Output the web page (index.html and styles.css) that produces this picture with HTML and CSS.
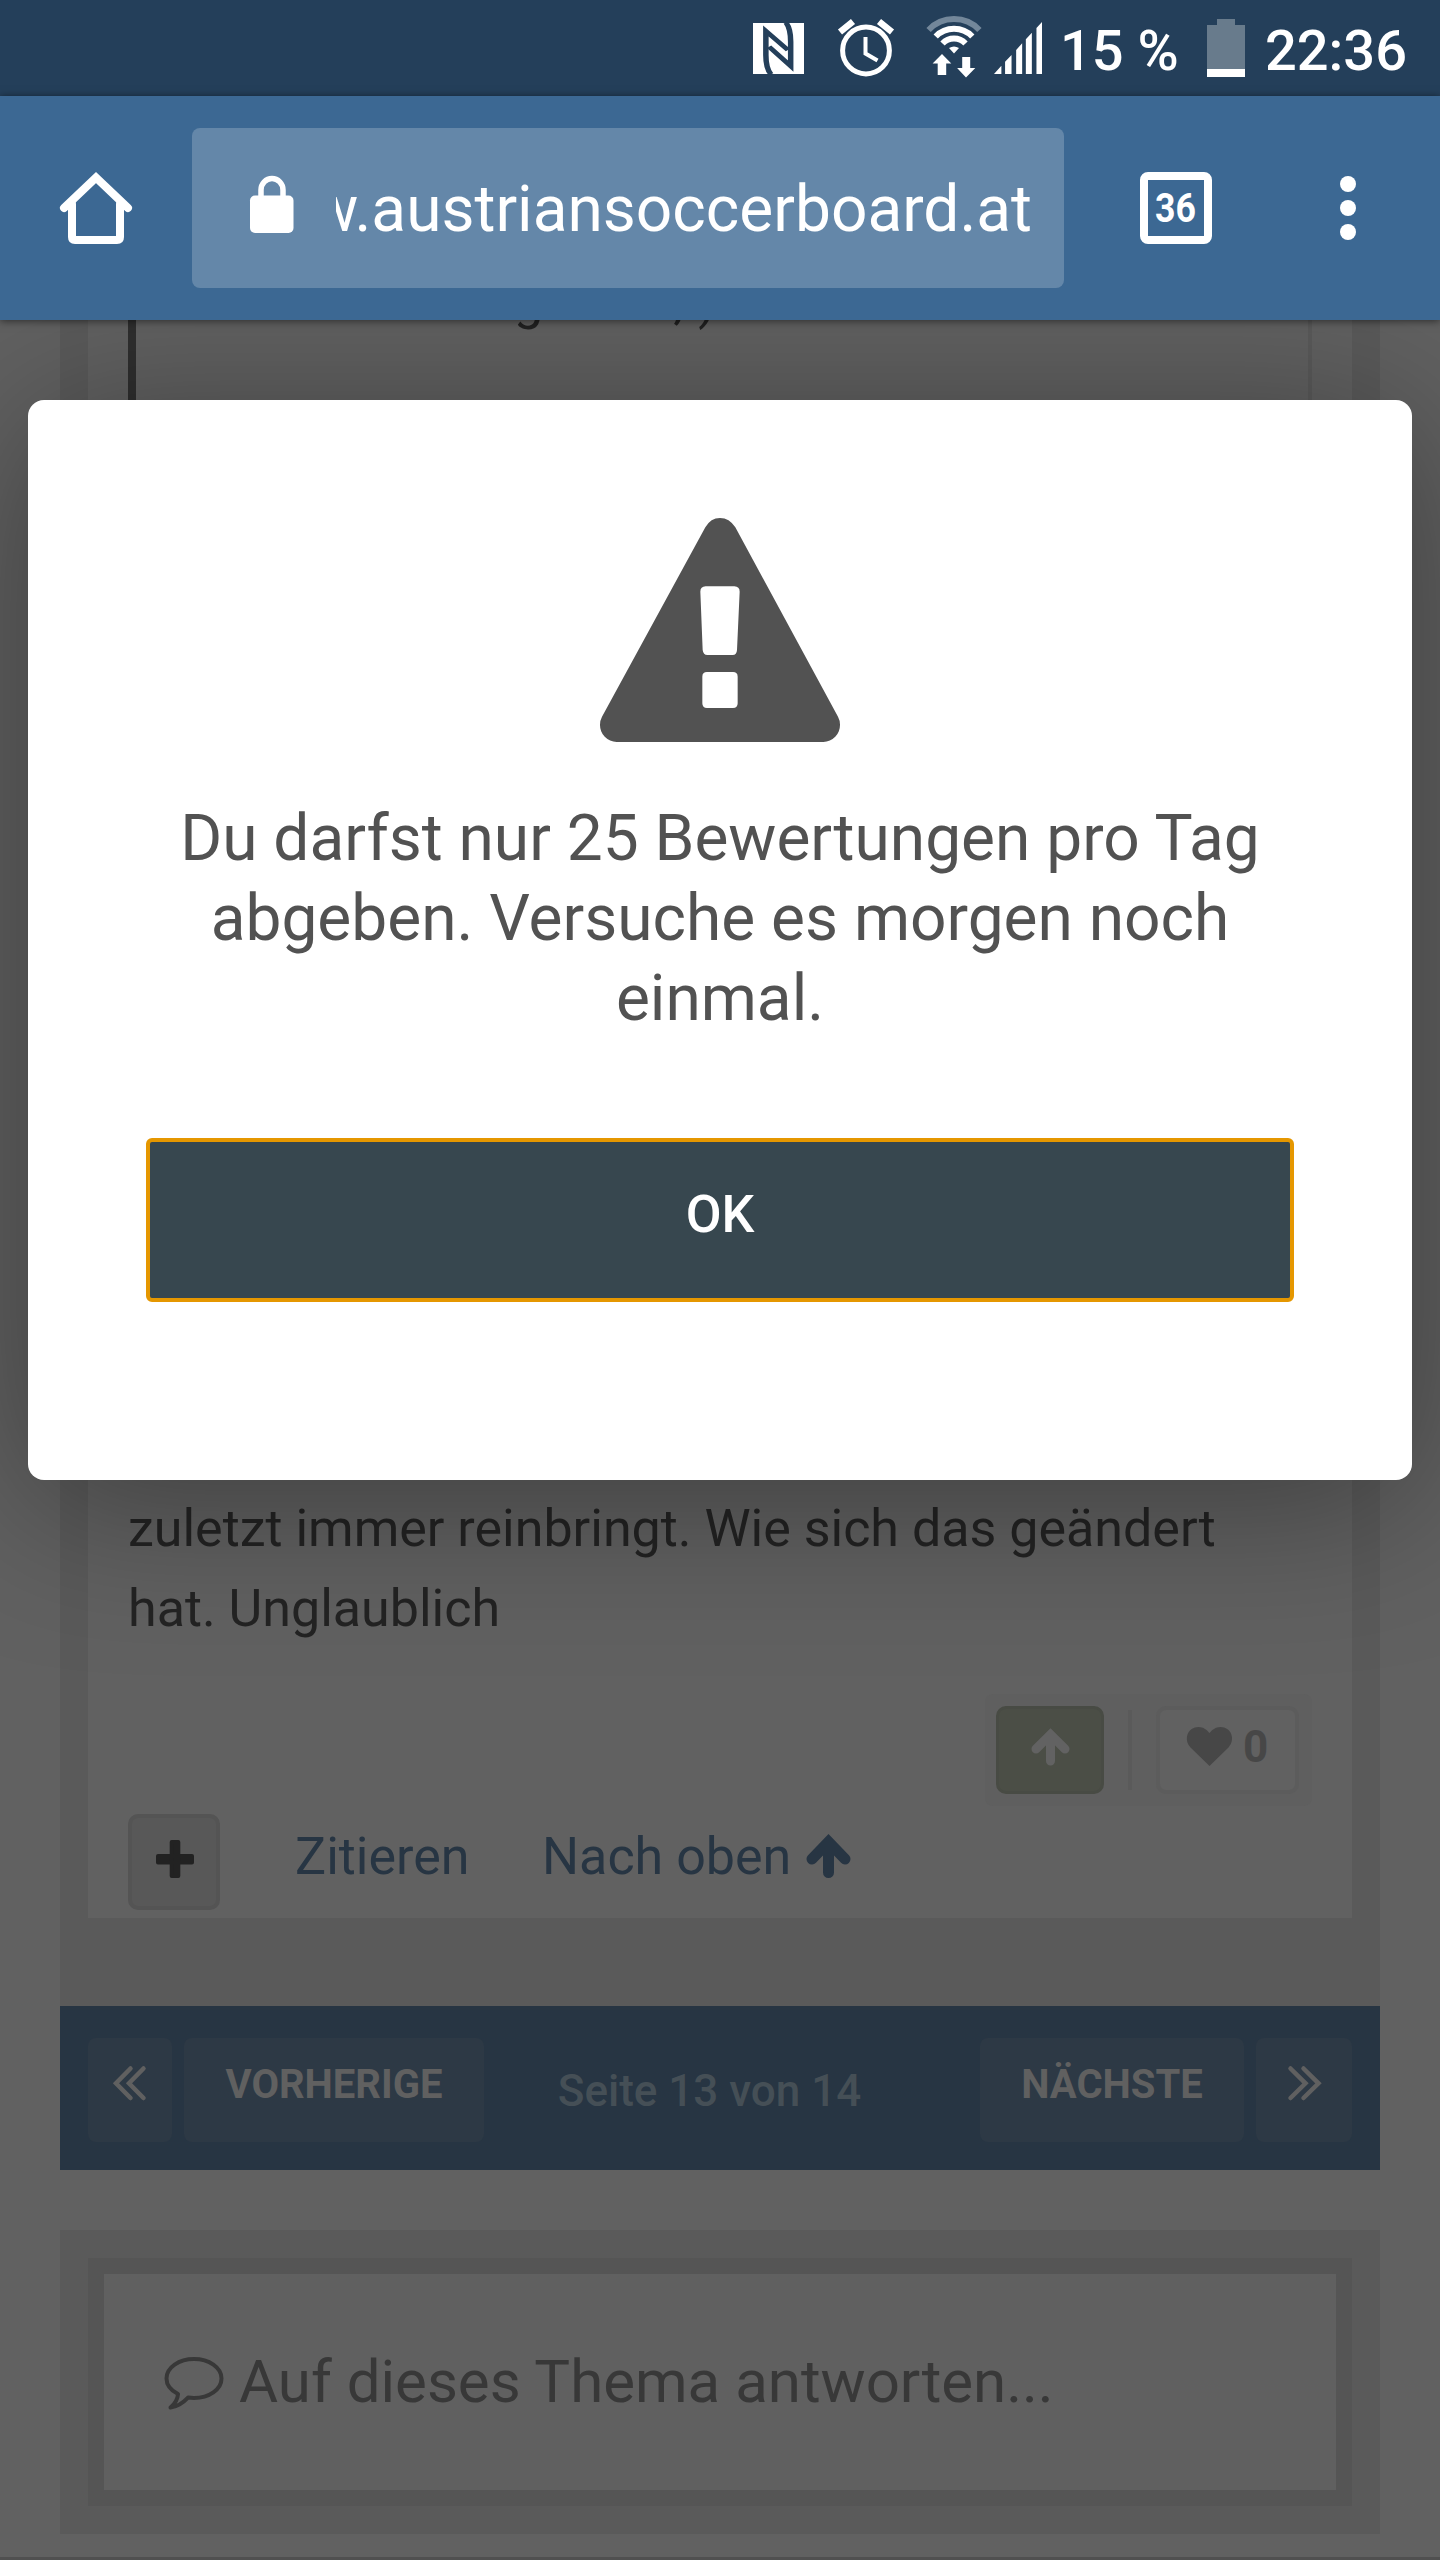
FILE: index.html
```html
<!DOCTYPE html>
<html lang="de">
<head>
<meta charset="utf-8">
<title>austriansoccerboard.at</title>
<link rel="stylesheet" href="styles.css">
</head>
<body>
<div class="screen">
  <header class="status">
    <svg class="nfc" viewBox="72 69 111 153" preserveAspectRatio="none"><rect x="72" y="69" width="111" height="153" fill="#fff"/><g fill="none" stroke="#243f5a" stroke-width="12"><path d="M111 223C102 208 100 190 100 165V93L148 150"/><path d="M144 68C152 83 154 100 154 125V198L107 140"/></g></svg>
    <svg class="alarm" viewBox="836 17 60 62"><g fill="none" stroke="#fff"><circle cx="866" cy="50.5" r="23.4" stroke-width="5"/><path d="M840 32l13-10.500M892 32l-13-10.500" stroke-width="6.500"/><path d="M865.500 37v16.500l12 7" stroke-width="4"/></g></svg>
    <svg class="wifi" viewBox="924 16 60 64"><g fill="none" stroke="#fff" stroke-width="6"><path d="M928.600 30A35 35 0 0 1 979.400 30" stroke="#73879a"/><path d="M935.700 36.500A25.500 25.500 0 0 1 972.300 36.500"/><path d="M942.500 43.500A16 16 0 0 1 965.500 43.500"/></g><path d="M949 48q5-3 10 0l-5 5.500zM942 54l9.300 9.500h-5.100V75h-8.500V63.500h-5.100zM966 77.500l9.300-9.500h-5.100V57h-8V68h-5.100z" fill="#fff"/></svg>
    <svg class="signal" viewBox="597 66 104 156" preserveAspectRatio="none"><path d="M597 222L613 197V222zM621 222V185L635 165V222zM645 222V150L658 130V222zM666 222V118L679 98V222zM689 222V84L701 66V222z" fill="#fff"/></svg>
    <span class="level">15 %</span>
    <svg class="battery" viewBox="1207 19 38 58"><path d="M1217 19h18v6h10v52h-38V25h10z" fill="#687b8c"/><path d="M1207 69h38v8h-38z" fill="#fff"/></svg>
    <span class="clock">22:36</span>
  </header>
  <nav class="toolbar">
    <svg class="home" viewBox="58 170 76 76"><g fill="none" stroke="#fff" stroke-width="8" stroke-linecap="round"><path d="M64 208L96 177.500L128 208"/><path d="M72 204V237q0 3 3 3H117q3 0 3-3V204"/></g></svg>
    <div class="omnibox">
      <svg class="lock" viewBox="250 176 44 58"><rect x="250" y="195.500" width="43.500" height="37.500" rx="5" fill="#fff"/><path d="M261 198V190a11 11.500 0 0 1 22 0V198" fill="none" stroke="#fff" stroke-width="5.500"/></svg>
      <div class="url"><span>www.austriansoccerboard.at</span></div>
    </div>
    <div class="tabs"><span>36</span></div>
    <div class="menu"><i></i><i></i><i></i></div>
  </nav>
  <main class="page">
    <section class="topic">
      <article class="post">
        <div class="quote"><span class="qa">g</span><span>;-)</span></div>
        <p class="body">zuletzt immer reinbringt. Wie sich das geändert hat. Unglaublich</p>
        <div class="votes">
          <span class="up"><svg viewBox="1030 1727 41 41" width="41" height="41"><path d="M1036 1749L1050.500 1734.500L1065 1749M1050.500 1737V1761" fill="none" stroke="#626262" stroke-width="9" stroke-linecap="round"/></svg></span>
          <i class="sep"></i>
          <span class="like"><svg viewBox="0 0 45 39" width="45" height="39"><path d="M22.500 39L3.500 20.500C-4 12 1 0 11.500 0C16.500 0 20 3 22.500 6C25 3 28.500 0 33.500 0C44 0 49 12 41.500 20.500z" fill="#474747"/></svg><b>0</b></span>
        </div>
        <div class="actions">
          <span class="plus"><svg viewBox="156 1840 38 38" width="38" height="38"><path d="M158 1856h34v6.500h-34zM171.700 1842h6.600v34h-6.600z" fill="#222" stroke="#222" stroke-width="4" stroke-linejoin="round"/></svg></span>
          <a class="cite">Zitieren</a>
          <a class="totop">Nach oben</a>
          <svg class="toparrow" viewBox="805 1834 47 45" width="47" height="45"><path d="M812 1859L828.500 1842L845 1859M828.500 1845V1872.500" fill="none" stroke="#273543" stroke-width="11" stroke-linecap="round"/></svg>
        </div>
      </article>
    </section>
    <div class="pager">
      <span class="btn first"><svg viewBox="114 2066 34 34" width="34" height="34"><path d="M131.500 2068.500L117 2083.300L131.500 2098M144.500 2068.500L130 2083.300L144.500 2098" fill="none" stroke="#606060" stroke-width="4.500" stroke-linecap="round"/></svg></span>
      <span class="btn prev">VORHERIGE</span>
      <span class="pos">Seite 13 von 14</span>
      <span class="btn next">NÄCHSTE</span>
      <span class="btn last"><svg viewBox="1287 2066 34 34" width="34" height="34"><path d="M1290.500 2068.500L1305.500 2083.300L1290.500 2098M1303.500 2068.500L1318.500 2083.300L1303.500 2098" fill="none" stroke="#606060" stroke-width="4.500" stroke-linecap="round"/></svg></span>
    </div>
    <section class="reply">
      <div class="field">
        <svg viewBox="163 2358 62 54" width="62" height="54"><path d="M194 2361c15 0 27.500 8.500 27.500 19.500s-12.500 19.500-27.500 19.500q-3 0-6-.4q-8 8.500-17.500 10q7-6 7.500-13.500q-11.500-6-11.500-15.600c0-11 12.500-19.500 27.500-19.500z" fill="none" stroke="#383838" stroke-width="4" stroke-linejoin="round"/></svg>
        <span>Auf dieses Thema antworten...</span>
      </div>
    </section>
  </main>
  <div class="dialog">
    <svg class="warn" viewBox="120 84 720 672"><path fill-rule="evenodd" fill="#525252" d="M436 112Q452 84 480 84Q508 84 526 112L834 680Q840 691 840 704A51 51 0 0 1 790 756H170A51 51 0 0 1 120 704Q120 691 126 680zM437 289Q421 290 421 305L428 480Q430 495 442 495H518Q530 495 531 480L539 305Q539 290 523 289zM441 546Q427 546 427 560V640Q427 654 441 654H519Q533 654 533 640V560Q533 546 519 546z"/></svg>
    <p class="message">Du darfst nur 25 Bewertungen pro Tag abgeben. Versuche es morgen noch einmal.</p>
    <button class="ok">OK</button>
  </div>
</div>
</body>
</html>
```
FILE: styles.css
```css
* { box-sizing: border-box; }
body { margin: 0; font-family: Roboto, "Liberation Sans", sans-serif; }
svg { display: block; flex: none; overflow: visible; }
p { margin: 0; }
.screen { position: relative; width: 1440px; height: 2560px; overflow: hidden; background: #616161; display: flex; flex-direction: column; }

.status { flex: none; height: 96px; background: #243f5a; display: flex; align-items: flex-start; padding-left: 753px; color: #fff; font-weight: 500; font-size: 56px; line-height: 102px; white-space: nowrap; }
.nfc { width: 51px; height: 51px; margin-top: 23px; }
.alarm { width: 60px; height: 62px; margin: 17px 0 0 32px; }
.wifi { width: 60px; height: 64px; margin: 16px 0 0 28px; }
.signal { width: 48px; height: 52px; margin: 22px 0 0 10px; }
.level { width: 165px; padding-left: 18px; }
.battery { width: 38px; height: 58px; margin-top: 19px; }
.clock { width: 162px; text-align: right; }

.toolbar { position: relative; z-index: 3; flex: none; height: 224px; background: #3c6893; display: flex; align-items: center; padding-left: 58px; box-shadow: 0 1px 8px rgba(0,0,0,.55); }
.home { width: 76px; height: 76px; }
.omnibox { width: 872px; height: 160px; margin-left: 58px; padding-left: 58px; border-radius: 8px; background: #6487a9; display: flex; align-items: center; }
.lock { width: 44px; height: 58px; margin-top: -7px; }
.url { margin-left: 42px; width: 696px; overflow: hidden; display: flex; justify-content: flex-end; color: #fff; font-size: 64px; line-height: 160px; padding-top: 3px; white-space: nowrap; }
.tabs { width: 72px; height: 72px; margin-left: 76px; border: 8px solid #fff; border-radius: 8px; color: #fff; font-weight: 700; font-size: 41px; display: flex; align-items: center; justify-content: center; }
.tabs span { transform: scaleX(.87); }
.menu { margin-left: 128px; display: flex; flex-direction: column; gap: 8px; }
.menu i { width: 16px; height: 16px; border-radius: 50%; background: #fff; }

.page { flex: none; height: 2240px; padding: 0 60px; border-bottom: 3px solid #505050; }
.topic { height: 1686px; padding: 0 28px; background: #5a5a5a; }
.post { height: 1598px; padding: 0 40px; background: #616161; }
.quote { height: 80px; border-left: 8px solid #2f2f2f; border-right: 4px solid #5a5a5a; padding-left: 378px; font-size: 52px; line-height: 80px; color: #222; display: flex; }
.quote span { margin-top: -59px; }
.qa { width: 159px; }
.body { margin-top: 1089px; font-size: 52px; line-height: 80px; color: #232323; }
.votes { margin: 45px 0 0 auto; width: 327px; height: 112px; padding: 12px 12px 12px 11px; border-radius: 8px; background: #5f5f5f; display: flex; align-items: center; }
.up { width: 108px; height: 88px; border-radius: 10px; background: #4b4e46; border: 3px solid #484b44; display: flex; justify-content: center; align-items: center; padding-bottom: 5px; }
.sep { width: 4px; height: 80px; margin-left: 24px; background: #5a5a5a; }
.like { width: 143px; height: 88px; margin-left: 24px; border: 4px solid #5c5c5c; border-radius: 10px; background: #616161; display: flex; align-items: center; padding: 0 0 8px 27px; color: #474747; font-size: 44px; line-height: 80px; }
.like b { margin: 1px 0 0 11px; }
.actions { margin-top: 8px; height: 96px; display: flex; align-items: center; color: #273543; font-size: 52px; line-height: 86px; white-space: nowrap; }
.actions a { height: 96px; }
.plus { width: 92px; height: 96px; border: 4px solid #545454; border-radius: 10px; background: #585858; display: flex; align-items: center; justify-content: center; padding: 0 0 6px 1px; }
.cite { width: 247px; margin-left: 75px; }
.totop { width: 263px; }
.toparrow { margin-top: -11px; }

.pager { height: 164px; padding: 32px 28px 28px; background: #273543; display: flex; font-size: 40px; }
.btn { height: 104px; border-radius: 8px; background: #2d3945; color: #606060; font-weight: 700; line-height: 93px; text-align: center; }
.btn svg { margin: 28px auto 0; }
.first { width: 84px; }
.prev { width: 300px; margin-left: 12px; }
.pos { width: 496px; padding-right: 45px; text-align: center; font-size: 44px; font-weight: 500; line-height: 107px; color: #454f56; }
.next { width: 264px; }
.last { width: 96px; margin-left: 12px; }

.reply { margin-top: 60px; height: 304px; padding: 28px; background: #5a5a5a; }
.field { height: 248px; border: 16px solid #555; background: #606060; padding: 0 0 0 59px; display: flex; align-items: center; color: #383838; font-size: 60px; }
.field svg { margin-top: 2px; }
.field span { margin: -2px 0 0 14px; }

.dialog { position: absolute; z-index: 2; left: 28px; top: 400px; width: 1384px; height: 1080px; padding: 118px 118px 0; border-radius: 16px; background: #fff; box-shadow: 0 20px 160px rgba(0,0,0,.38); text-align: center; }
.warn { width: 240px; height: 224px; margin: 0 auto; }
.message { margin-top: 57px; font-size: 64px; line-height: 80px; color: #525252; }
.ok { display: block; width: 1148px; height: 164px; margin-top: 99px; padding: 0 0 12px; border: 4px solid #e59700; border-radius: 6px; background: #37474f; color: #fff; font: 500 52px Roboto, "Liberation Sans", sans-serif; }
```
